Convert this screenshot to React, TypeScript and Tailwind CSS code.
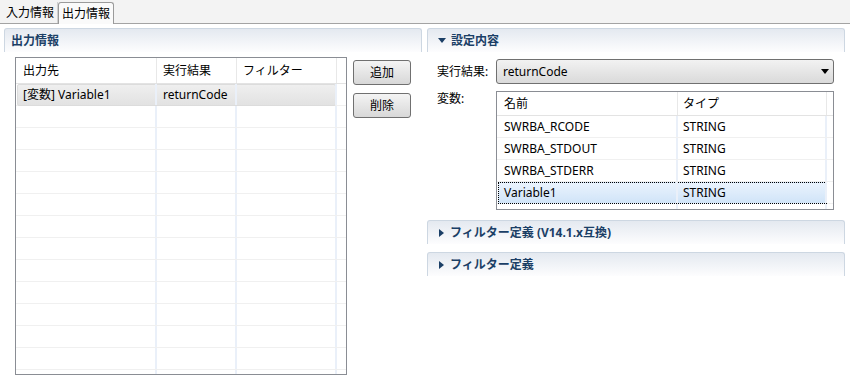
import React from 'react';

const FONT = "font-['Noto_Sans','Noto_Sans_CJK_JP',sans-serif]";

const TriDown = ({ color = '#1b3f66' }: { color?: string }) => (
    <svg width="8" height="5" viewBox="0 0 8 5">
        <path d="M0 0 H8 L4 5 Z" fill={color} />
    </svg>
);

const TriRight = () => (
    <svg width="5" height="8" viewBox="0 0 5 8">
        <path d="M0 0 L5 4 L0 8 Z" fill="#1b3f66" />
    </svg>
);

const SectionHeader: React.FC<{ title: string; icon?: 'down' | 'right' }> = ({ title, icon }) => (
    <div className="h-[24px] flex items-center gap-[5px] pl-[6px] rounded-t-[3px] border-t border-l border-r border-[#cdd7e2] bg-gradient-to-b from-[#e4e9f0] to-[#fdfdfe]">
        {icon === 'down' && <span className="ml-[4px] flex items-center"><TriDown /></span>}
        {icon === 'right' && <span className="ml-[5px] mr-[1px] flex items-center"><TriRight /></span>}
        <span className="font-bold text-[#1b3f66] leading-none">{title}</span>
    </div>
);

const Button: React.FC<{ label: string }> = ({ label }) => (
    <button className="w-[58px] h-[25px] rounded-[3px] border border-[#707070] bg-gradient-to-b from-[#f4f4f4] to-[#d8d8d8] flex items-center justify-center text-black">
        {label}
    </button>
);

const outputRows = [{ dest: '[変数] Variable1', result: 'returnCode', filter: '' }];

const OutputTable = () => (
    <div className="w-[332px] h-[318px] border border-[#8a8d94] bg-white overflow-hidden flex flex-col">
        <div className="h-[26px] shrink-0 flex border-b border-[#e3e3e3]">
            <div className="w-[141px] pl-[7px] flex items-center border-r border-[#e8e8e8]">出力先</div>
            <div className="w-[80px] pl-[6px] flex items-center border-r border-[#e8e8e8]">実行結果</div>
            <div className="w-[100px] pl-[6px] flex items-center border-r border-[#e8e8e8]">フィルター</div>
            <div className="flex-1" />
        </div>
        {Array.from({ length: 14 }).map((_, i) => {
            const row = outputRows[i];
            return (
                <div key={i} className="h-[22px] shrink-0 flex border-b border-[#f0f0f0] relative">
                    {row && (
                        <div className="absolute left-[1px] top-0 w-[319px] h-[22px] rounded-[2px] border border-[#dcdcdc] bg-gradient-to-b from-[#efefef] to-[#e2e2e2]" />
                    )}
                    <div className="relative w-[141px] pl-[7px] flex items-center border-r-2 border-[#eaf0f9]">{row?.dest}</div>
                    <div className="relative w-[80px] pl-[6px] flex items-center border-r-2 border-[#eaf0f9]">{row?.result}</div>
                    <div className="relative w-[100px] pl-[6px] flex items-center border-r-2 border-[#eaf0f9]">{row?.filter}</div>
                    <div className="flex-1" />
                </div>
            );
        })}
    </div>
);

const vars = [
    { name: 'SWRBA_RCODE', type: 'STRING' },
    { name: 'SWRBA_STDOUT', type: 'STRING' },
    { name: 'SWRBA_STDERR', type: 'STRING' },
    { name: 'Variable1', type: 'STRING', selected: true },
];

const VarTable = () => (
    <div className="w-[338px] h-[119px] border border-[#8a8d94] bg-white overflow-hidden flex flex-col">
        <div className="h-[24px] shrink-0 flex border-b border-[#e3e3e3]">
            <div className="w-[181px] pl-[7px] flex items-center border-r border-[#e8e8e8]">名前</div>
            <div className="w-[149px] pl-[5px] flex items-center border-r border-[#e8e8e8]">タイプ</div>
            <div className="flex-1" />
        </div>
        {vars.map((v) => (
            <div key={v.name} className="h-[22px] shrink-0 flex border-b border-[#f0f0f0] relative">
                {v.selected && (
                    <div className="absolute left-[1px] top-0 w-[329px] h-[22px] border border-dotted border-black bg-gradient-to-b from-[#eaf3fd] to-[#d0e4f8]" />
                )}
                <div className="relative w-[181px] pl-[7px] flex items-center border-r-2 border-[#eaf0f9]">{v.name}</div>
                <div className="relative w-[149px] pl-[5px] flex items-center border-r-2 border-[#eaf0f9]">{v.type}</div>
                <div className="flex-1" />
            </div>
        ))}
        <div className="flex flex-1">
            <div className="w-[181px] border-r-2 border-[#eaf0f9]" />
            <div className="w-[149px] border-r-2 border-[#eaf0f9]" />
        </div>
    </div>
);

const App: React.FC = () => {
    return (
        <div className={`${FONT} w-[850px] h-[386px] bg-white text-[12px] text-black overflow-hidden`}>
            {/* Tabs */}
            <div className="h-[24px] bg-[#f3f3f3] border-b border-[#a3a3a3] flex items-end">
                <div className="h-[21px] pl-[6px] pr-[3px] flex items-center border-r border-[#cfcfcf]">入力情報</div>
                <div className="h-[22px] px-[3px] flex items-center bg-[#fafafa] border border-b-0 border-[#9a9a9a] rounded-t-[3px] -mb-px">
                    出力情報
                </div>
            </div>

            <div className="flex pt-[4px]">
                {/* Left: output info */}
                <div className="w-[418px] ml-[4px] shrink-0">
                    <SectionHeader title="出力情報" />
                    <div className="flex mt-[5px] ml-[11px]">
                        <OutputTable />
                        <div className="flex flex-col gap-[8px] ml-[6px] mt-[3px]">
                            <Button label="追加" />
                            <Button label="削除" />
                        </div>
                    </div>
                </div>

                {/* Right: settings */}
                <div className="w-[418px] ml-[5px] shrink-0">
                    <SectionHeader title="設定内容" icon="down" />
                    <div className="pl-[10px]">
                        <div className="flex items-center mt-[7px]">
                            <span className="w-[59px]">実行結果:</span>
                            <div className="w-[338px] h-[25px] rounded-[3px] border border-[#707070] bg-gradient-to-b from-[#f2f2f2] to-[#dadada] flex items-center justify-between pl-[6px] pr-[4px]">
                                <span>returnCode</span>
                                <TriDown color="#000" />
                            </div>
                        </div>
                        <div className="flex mt-[7px]">
                            <span className="w-[59px] leading-[16px]">変数:</span>
                            <VarTable />
                        </div>
                    </div>
                    <div className="mt-[10px]">
                        <SectionHeader title="フィルター定義 (V14.1.x互換)" icon="right" />
                    </div>
                    <div className="mt-[8px]">
                        <SectionHeader title="フィルター定義" icon="right" />
                    </div>
                </div>
            </div>
        </div>
    );
};

export default App;
